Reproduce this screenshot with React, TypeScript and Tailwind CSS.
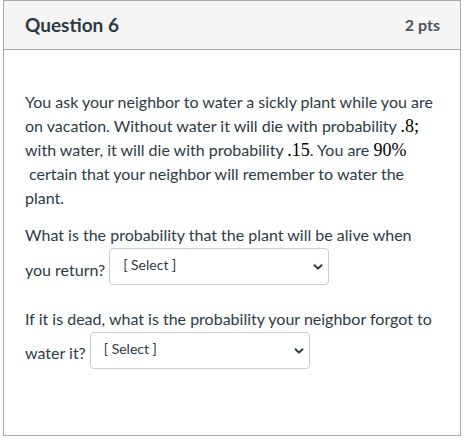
function Chevron() {
  return (
    <svg width="10" height="10" viewBox="0 0 10 10" className="shrink-0">
      <path d="M1.5 3.2 L5 6.6 L8.5 3.2" fill="none" stroke="#2d3b45" strokeWidth="2" strokeLinecap="round" strokeLinejoin="round" />
    </svg>
  );
}

function SelectBox() {
  return (
    <div className="w-[220px] h-[37px] border border-[#c7cdd1] rounded-[4px] bg-white flex items-center justify-between pl-[13px] pr-[5px]">
      <span className="text-[14px] text-[#2d3b45] -mt-[3px]">[ Select ]</span>
      <Chevron />
    </div>
  );
}

function M({ children }: { children: React.ReactNode }) {
  return <span className="font-['Liberation_Serif',serif] text-[18px] text-black">{children}</span>;
}

export default function App() {
  return (
    <div className="w-[464px] h-[443px] bg-white font-['Lato',sans-serif] text-[#2d3b45]">
      <div className="ml-[3px] w-[458px] h-[436px] border border-[#a9a9a9] flex flex-col">
        <div className="h-[49px] bg-[#f5f5f5] border-b border-[#a9a9a9] flex items-center justify-between pl-[21px] pr-[20px]">
          <h2 className="text-[19px] font-bold">Question 6</h2>
          <span className="text-[16px] font-bold text-[#4a545c]">2 pts</span>
        </div>
        <div className="pl-[21px] pt-[40px] text-[16px] leading-[24px] whitespace-nowrap">
          <div>
            <div>You ask your neighbor to water a sickly plant while you are</div>
            <div>on vacation. Without water it will die with probability <M>.8;</M></div>
            <div>with water, it will die with probability <M>.15</M>. You are <M>90%</M></div>
            <div className="pl-[4px]">certain that your neighbor will remember to water the</div>
            <div>plant.</div>
          </div>
          <div className="mt-[13px]">
            <div>What is the probability that the plant will be alive when</div>
            <div className="flex items-start gap-[4px] mt-[1px]">
              <span className="mt-[10px]">you return?</span>
              <SelectBox />
            </div>
          </div>
          <div className="mt-[22px]">
            <div>If it is dead, what is the probability your neighbor forgot to</div>
            <div className="flex items-start gap-[4px] mt-[1px]">
              <span className="mt-[9px]">water it?</span>
              <SelectBox />
            </div>
          </div>
        </div>
      </div>
    </div>
  );
}
